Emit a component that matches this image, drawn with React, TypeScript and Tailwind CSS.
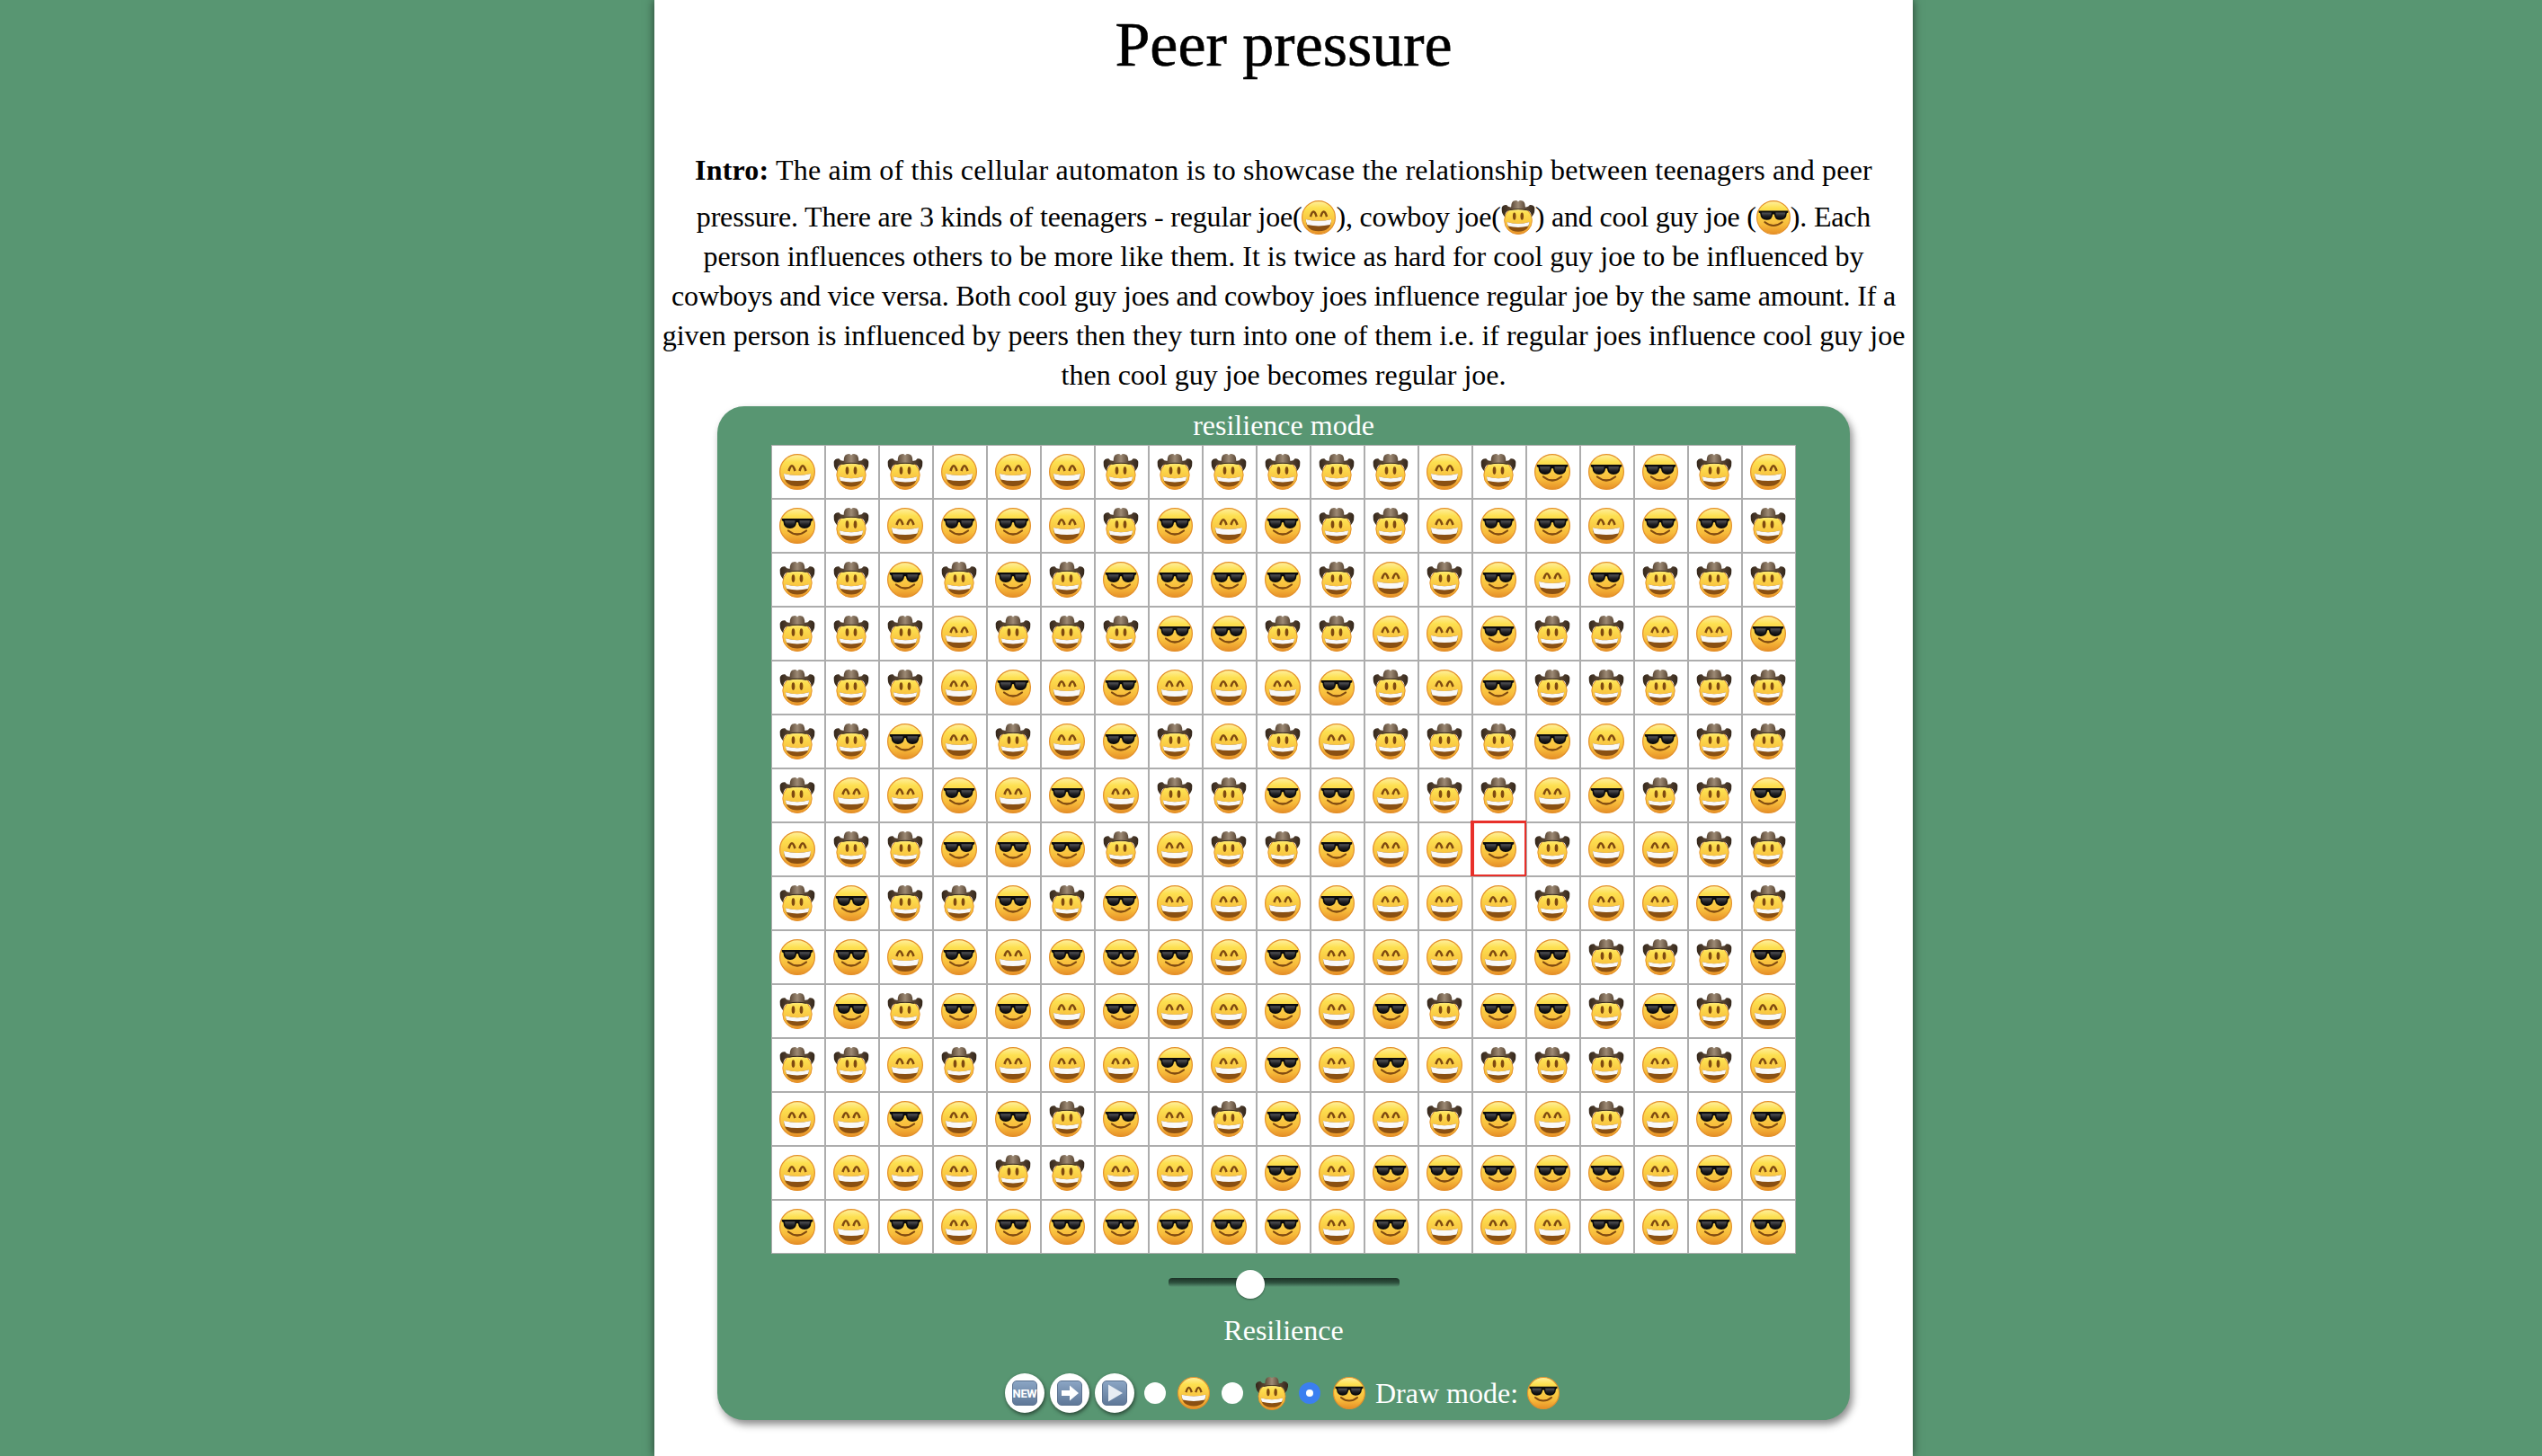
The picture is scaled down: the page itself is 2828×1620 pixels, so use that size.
const ROWS = [
  'GCCGGGCCCCCCGCSSSCG',
  'SCGSSGCSGSCCGSSGSSC',
  'CCSCSCSSSSCGCSGSCCC',
  'CCCGCCCSSCCGGSCCGGS',
  'CCCGSGSGGGSCGSCCCCC',
  'CCSGCGSCGCGCCCSGSCC',
  'CGGSGSGCCSSGCCGSCCS',
  'GCCSSSCGCCSGGSCGGCC',
  'CSCCSCSGGGSGGGCGGSC',
  'SSGSGSSSGSGGGGSCCCS',
  'CSCSSGSGGSGSCSSCSCG',
  'CCGCGGGSGSGSGCCCGCG',
  'GGSGSCSGCSGGCSGCGSS',
  'GGGGCCGGGSGSSSSSGSG',
  'SGSGSSSSSSGSGGGSGSS',
]

function EmojiDefs() {
  return (
    <svg className="absolute h-0 w-0" aria-hidden="true">
      <defs>
        <linearGradient id="skin" x1="0" y1="0" x2="0" y2="1">
          <stop offset="0" stopColor="#fff0a0" />
          <stop offset="0.22" stopColor="#fde050" />
          <stop offset="0.7" stopColor="#f8bd3c" />
          <stop offset="1" stopColor="#e68f26" />
        </linearGradient>
        <linearGradient id="hat" x1="0" y1="0" x2="1" y2="0">
          <stop offset="0" stopColor="#33261a" />
          <stop offset="0.28" stopColor="#5a4735" />
          <stop offset="0.5" stopColor="#9d8a75" />
          <stop offset="0.72" stopColor="#5a4735" />
          <stop offset="1" stopColor="#33261a" />
        </linearGradient>
        <linearGradient id="lens" x1="0" y1="0" x2="0" y2="1">
          <stop offset="0" stopColor="#55565a" />
          <stop offset="0.55" stopColor="#222226" />
          <stop offset="1" stopColor="#0c0c0e" />
        </linearGradient>
        <symbol id="grin" viewBox="0 0 40 40">
          <circle cx="20" cy="20" r="19.4" fill="url(#skin)" stroke="#e4902a" strokeWidth="1.2" />
          <path d="M10.5 19Q14 7.5 17.5 19M22.5 19Q26 7.5 29.5 19" fill="none" stroke="#7f4a10" strokeWidth="2.6" />
          <path d="M5 22Q20 26 35 22Q35 36 20 36Q5 36 5 22Z" fill="#8a5012" />
          <path d="M5 22Q20 26 35 22Q34.9 25.6 33.4 28.4Q20 31.4 6.6 28.4Q5.1 25.6 5 22Z" fill="#f9f9f9" />
        </symbol>
        <symbol id="cool" viewBox="0 0 40 40">
          <circle cx="20" cy="20" r="19.4" fill="url(#skin)" stroke="#e4902a" strokeWidth="1.2" />
          <path d="M2.8 12H37.2V14.2L35.6 15Q35 23 28 23Q21.5 23 21 16.5Q20 15.6 19 16.5Q18.5 23 12 23Q5 23 4.4 15L2.8 14.2Z" fill="#0b0b0d" />
          <path d="M6 14.2H17.6Q17.5 21.4 12 21.4Q6.4 21.4 6 14.2ZM22.4 14.2H34Q33.6 21.4 28 21.4Q22.5 21.4 22.4 14.2Z" fill="url(#lens)" />
          <path d="M10 25.5Q20 33.5 30 25.5" fill="none" stroke="#7f4a10" strokeWidth="2.2" strokeLinecap="round" />
        </symbol>
        <symbol id="cowboy" viewBox="0 0 40 41">
          <circle cx="20" cy="24" r="16.6" fill="url(#skin)" stroke="#e4902a" strokeWidth="1" />
          <path d="M11.5 8Q11.5 0.5 16 0.2Q18.5 -0.2 20 1.5Q21.5 -0.2 24 0.2Q28.5 0.5 28.5 8Q32 8.5 34 5.5Q38 5 40 9Q40.5 15 36 20Q36 14 32 12.4Q20 9.6 8 12.4Q4 14 4 20Q-0.5 15 0 9Q2 5 6 5.5Q8 8.5 11.5 8Z" fill="url(#hat)" />
          <path d="M10 11Q20 9 30 11L30 12Q20 9.8 10 12Z" fill="#33261a" />
          <ellipse cx="15.4" cy="19" rx="1.9" ry="4.5" fill="#7f4a10" />
          <ellipse cx="24.6" cy="19" rx="1.9" ry="4.5" fill="#7f4a10" />
          <path d="M6.6 26Q20 30 33.4 26Q33 37.4 20 37.4Q7 37.4 6.6 26Z" fill="#8a5012" />
          <path d="M6.6 26Q20 30 33.4 26Q33.4 28.6 32 30.8Q20 33.8 8 30.8Q6.6 28.6 6.6 26Z" fill="#f9f9f9" />
        </symbol>
      </defs>
    </svg>
  )
}

function Emoji({ id, className }: { id: string; className: string }) {
  return (
    <svg className={className} viewBox={id === 'cowboy' ? '0 0 40 41' : '0 0 40 40'}>
      <use href={'#' + id} />
    </svg>
  )
}

const KINDS: Record<string, string> = { G: 'grin', C: 'cowboy', S: 'cool' }

function Cell({ kind, selected }: { kind: string; selected: boolean }) {
  return (
    <div className="relative flex h-[60px] w-[60px] items-center justify-center border border-[#adadad] bg-white pr-[2px]">
      <Emoji id={KINDS[kind]} className="h-[40px] w-[40px]" />
      {selected && (
        <div className="absolute -top-[3px] -left-[3px] h-[62px] w-[62px] border-t-[3px] border-r-2 border-b-2 border-l-[4px] border-[#e8302a]" />
      )}
    </div>
  )
}

function TileButton({ children }: { children: React.ReactNode }) {
  return (
    <button className="flex h-[44px] w-[44px] items-center justify-center rounded-full bg-white shadow-[1px_2px_4px_rgba(0,0,0,0.55)]">
      <span className="flex h-[28px] w-[28px] items-center justify-center rounded-[5px] border border-[#5d7391] bg-gradient-to-b from-[#8ba5c4] to-[#5f7898]">
        {children}
      </span>
    </button>
  )
}

function Radio({ checked }: { checked?: boolean }) {
  if (checked) {
    return (
      <span className="flex h-[24px] w-[24px] items-center justify-center rounded-full bg-[#3b7ff0]">
        <span className="h-[8px] w-[8px] rounded-full bg-white" />
      </span>
    )
  }
  return <span className="h-[24px] w-[24px] rounded-full bg-white" />
}

export default function App() {
  return (
    <div className="h-screen overflow-hidden bg-[#589672] font-['Liberation_Serif',serif] text-black">
      <EmojiDefs />
      <div className="ml-[728px] h-full w-[1400px] bg-white shadow-[0_0_10px_rgba(0,0,0,0.6)]">
        <h1 className="h-[167px] pt-[10px] text-center text-[70px] leading-[80px] font-medium [-webkit-text-stroke:0.6px_black]">Peer pressure</h1>

        <div className="text-center text-[32px] leading-[44px] whitespace-nowrap">
          <p className="tracking-[0.2px]"><b>Intro:</b> The aim of this cellular automaton is to showcase the relationship between teenagers and peer</p>
          <p className="mt-[8px] h-[44px] tracking-[-0.18px]">
            pressure. There are 3 kinds of teenagers - regular joe(<Emoji id="grin" className="inline h-[38px] w-[38px] align-[-9px]" />), cowboy joe(<Emoji id="cowboy" className="inline h-[38px] w-[38px] align-[-9px]" />) and cool guy joe (<Emoji id="cool" className="inline h-[38px] w-[38px] align-[-9px]" />). Each
          </p>
          <p>person influences others to be more like them. It is twice as hard for cool guy joe to be influenced by</p>
          <p className="tracking-[-0.19px]">cowboys and vice versa. Both cool guy joes and cowboy joes influence regular joe by the same amount. If a</p>
          <p>given person is influenced by peers then they turn into one of them i.e. if regular joes influence cool guy joe</p>
          <p>then cool guy joe becomes regular joe.</p>
        </div>

        <div className="mx-auto mt-[13px] h-[1128px] w-[1260px] rounded-[30px] bg-[#589672] text-white shadow-[3px_5px_8px_rgba(0,0,0,0.45)]">
          <div className="h-[43px] text-center text-[32px] leading-[43px]">resilience mode</div>

          <div className="mx-auto grid w-[1140px] grid-cols-[repeat(19,60px)]">
            {ROWS.map((row, r) =>
              row.split('').map((kind, c) => <Cell key={r + '-' + c} kind={kind} selected={r === 7 && c === 13} />)
            )}
          </div>

          <div className="relative mx-auto mt-[27px] h-[10px] w-[257px] rounded-[4px] bg-gradient-to-b from-[#1c3327] via-[#2d4f3d] to-[#5a9574]">
            <div className="absolute -top-[9px] left-[75px] h-[32px] w-[32px] rounded-full bg-white shadow-[0_1px_2px_rgba(0,0,0,0.4)]" />
          </div>

          <div className="mt-[28px] text-center text-[32px] leading-[40px]">Resilience</div>

          <div className="mt-[28px] flex h-[44px] items-center justify-center pr-[3px]">
            <div className="flex gap-[6px]">
              <TileButton>
                <span className="font-['Roboto',sans-serif] text-[13px] leading-none font-bold tracking-tight text-white">NEW</span>
              </TileButton>
              <TileButton>
                <svg viewBox="0 0 24 24" className="h-[24px] w-[24px]">
                  <path d="M3 9H12V3.5L22 12L12 20.5V15H3Z" fill="white" />
                </svg>
              </TileButton>
              <TileButton>
                <svg viewBox="0 0 24 24" className="h-[24px] w-[24px]">
                  <path d="M5 2.5L21 12L5 21.5Z" fill="#e8edf3" />
                </svg>
              </TileButton>
            </div>
            <div className="ml-[11px] flex items-center gap-[13px]">
              <Radio />
              <Emoji id="grin" className="h-[36px] w-[36px]" />
            </div>
            <div className="ml-[13px] flex items-center gap-[13px]">
              <Radio />
              <Emoji id="cowboy" className="h-[37px] w-[38px]" />
            </div>
            <div className="ml-[11px] flex items-center gap-[14px]">
              <Radio checked />
              <Emoji id="cool" className="h-[36px] w-[36px]" />
            </div>
            <span className="ml-[11px] text-[32px] leading-[40px]">Draw mode:</span>
            <Emoji id="cool" className="ml-[10px] h-[36px] w-[36px]" />
          </div>
        </div>
      </div>
    </div>
  )
}
